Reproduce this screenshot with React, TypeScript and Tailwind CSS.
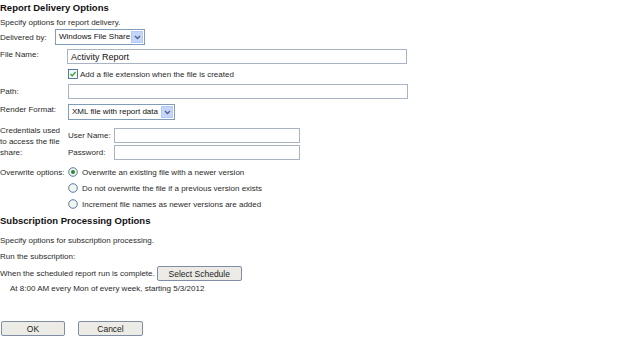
import React from 'react';

const Arrow: React.FC = () => (
  <div className="w-[12px] h-[12px] mr-[1px] bg-[#c5d5fc] border border-[#b6c8f5] flex items-center justify-center shrink-0">
    <svg width="7" height="5" viewBox="0 0 7 5">
      <path d="M1 1 L3.5 3.5 L6 1" fill="none" stroke="#4d6185" strokeWidth="1.3" />
    </svg>
  </div>
);

const Select: React.FC<{ value: string; width: string }> = ({ value, width }) => (
  <div className={`${width} h-[16px] border border-[#7f9db9] bg-white flex items-center justify-between pl-[3px] overflow-hidden`}>
    <span className="text-[8px] leading-[10px] text-[#111] whitespace-nowrap">{value}</span>
    <Arrow />
  </div>
);

const Input: React.FC<{ width: string; value?: string }> = ({ width, value }) => (
  <div className={`${width} h-[15px] border border-[#a9b3c4] bg-white flex items-center pl-[3px]`}>
    {value && <span className="text-[9px] leading-[10px] text-[#111]">{value}</span>}
  </div>
);

const Radio: React.FC<{ checked?: boolean }> = ({ checked }) => (
  <svg width="10" height="10" viewBox="0 0 10 10" className="shrink-0">
    <circle cx="5" cy="5" r="4.3" fill="#f4f4f0" stroke="#2e5f8c" strokeWidth="0.8" />
    {checked && <circle cx="5" cy="5" r="2" fill="#2c8a2c" />}
  </svg>
);

const Button: React.FC<{ label: string; width: string }> = ({ label, width }) => (
  <div className={`${width} h-[15px] border border-[#7f8ea6] rounded-[2px] bg-[#ecebe6] flex items-center justify-center text-[8.5px] leading-[10px] text-[#222]`}>
    {label}
  </div>
);

const App: React.FC = () => {
  return (
    <div className="w-[640px] h-[350px] bg-white text-[8px] leading-[11px] text-[#2a2a2a] overflow-hidden" style={{ fontFamily: '"Liberation Sans", Arial, sans-serif' }}>
      <div className="h-[14px] flex items-center font-bold text-[9.5px] text-[#111]">Report Delivery Options</div>
      <div className="mt-[1px] h-[14px] flex items-center">Specify options for report delivery.</div>

      <div className="h-[16px] flex items-center">
        <span className="w-[55px]">Delivered by:</span>
        <Select value="Windows File Share" width="w-[90px]" />
      </div>

      <div className="mt-[4px] flex items-start">
        <span className="w-[67px] leading-[11px]">File Name:</span>
        <Input width="w-[340px]" value="Activity Report" />
      </div>

      <div className="h-[20px] flex items-center pl-[68px] gap-[2px]">
        <svg width="10" height="10" viewBox="0 0 10 10" className="shrink-0">
          <rect x="0.5" y="0.5" width="9" height="9" fill="#f6f6f2" stroke="#2e5f8c" strokeWidth="0.8" />
          <path d="M2.5 5 L4.2 6.8 L7.5 3" fill="none" stroke="#21a121" strokeWidth="1.2" />
        </svg>
        <span>Add a file extension when the file is created</span>
      </div>

      <div className="flex items-center">
        <span className="w-[68px]">Path:</span>
        <Input width="w-[340px]" />
      </div>

      <div className="mt-[5px] flex items-start">
        <span className="w-[68px] leading-[12px]">Render Format:</span>
        <Select value="XML file with report data" width="w-[107px]" />
      </div>

      <div className="mt-[5px] flex items-start">
        <div className="w-[68px] leading-[11px]">
          Credentials used
          <br />
          to access the file
          <br />
          share:
        </div>
        <div className="pt-[3px] flex flex-col gap-[2px]">
          <div className="flex items-center">
            <span className="w-[46px]">User Name:</span>
            <Input width="w-[186px]" />
          </div>
          <div className="flex items-center">
            <span className="w-[46px]">Password:</span>
            <Input width="w-[186px]" />
          </div>
        </div>
      </div>

      <div className="mt-[4px] flex items-start">
        <span className="w-[68px] h-[16px] flex items-center">Overwrite options:</span>
        <div className="flex flex-col">
          <div className="h-[16px] flex items-center gap-[4px]">
            <Radio checked />
            <span>Overwrite an existing file with a newer version</span>
          </div>
          <div className="h-[16px] flex items-center gap-[4px]">
            <Radio />
            <span>Do not overwrite the file if a previous version exists</span>
          </div>
          <div className="h-[16px] flex items-center gap-[4px]">
            <Radio />
            <span>Increment file names as newer versions are added</span>
          </div>
        </div>
      </div>

      <div className="h-[16px] flex items-center font-bold text-[9.5px] text-[#111]">Subscription Processing Options</div>
      <div className="mt-[4px] h-[16px] flex items-center">Specify options for subscription processing.</div>
      <div className="h-[17px] flex items-center">Run the subscription:</div>

      <div className="mt-[1px] h-[15px] flex items-center gap-[2px]">
        <span>When the scheduled report run is complete.</span>
        <Button label="Select Schedule" width="w-[85px]" />
      </div>
      <div className="h-[14px] flex items-center pl-[10px]">At 8:00 AM every Mon of every week, starting 5/3/2012</div>

      <div className="mt-[26px] flex items-center gap-[13px] pl-[1px]">
        <Button label="OK" width="w-[64px]" />
        <Button label="Cancel" width="w-[65px]" />
      </div>
    </div>
  );
};

export default App;
